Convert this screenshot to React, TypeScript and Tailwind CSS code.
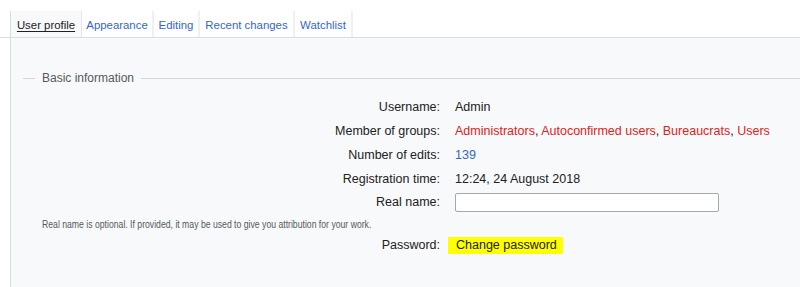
import React from "react";

const font = { fontFamily: '"Liberation Sans", Arial, sans-serif' };

function Row({ label, children, h = "h-[24px]" }: { label: string; children: React.ReactNode; h?: string }) {
  return (
    <div className={`flex items-center ${h}`}>
      <div className="w-[429px] text-right text-[12.5px] text-[#202122] leading-none">{label}</div>
      <div className="ml-[15px] text-[12.5px] leading-none flex items-center">{children}</div>
    </div>
  );
}

export default function App() {
  const tabs = [
    { t: "Appearance", w: "w-[72px]" },
    { t: "Editing", w: "w-[46px]" },
    { t: "Recent changes", w: "w-[95px]" },
    { t: "Watchlist", w: "w-[58px]" },
  ];
  return (
    <div className="w-[800px] h-[287px] bg-white overflow-hidden" style={font}>
      <div className="flex pl-[10px] pt-[11px] border-b border-[#dadde1]">
        <div className="w-[72px] h-[26px] -mb-px bg-[#f8f9fa] border-l border-[#dadde1] border-r border-r-[#e4e6e9] flex items-center justify-center pt-[4px]">
          <span className="text-[11.4px] text-[#202122] underline underline-offset-2 leading-none">User profile</span>
        </div>
        {tabs.map(({ t, w }) => (
          <div key={t} className={`${w} h-[26px] bg-white flex items-center justify-center pt-[4px] border-r-2 border-[#eef0f2]`}>
            <span className="text-[11.4px] text-[#3366cc] leading-none">{t}</span>
          </div>
        ))}
      </div>
      <div className="h-[250px] bg-[#f8f9fa] border-l border-[#dadde1] ml-[10px] pt-[30px]">
        <div className="flex items-center h-[20px] ml-[12px]">
          <div className="w-[12px] h-px bg-[#d3d6da]" />
          <span className="px-[7px] text-[12px] text-[#54595d] leading-none">Basic information</span>
          <div className="flex-1 h-px bg-[#d3d6da]" />
        </div>
        <div className="mt-[7px]">
          <Row label="Username:">
            <span className="text-[#202122]">Admin</span>
          </Row>
          <Row label="Member of groups:">
            <span className="text-[#202122]">
              <span className="text-[#d22]">Administrators</span>,{" "}
              <span className="text-[#d22]">Autoconfirmed users</span>,{" "}
              <span className="text-[#d22]">Bureaucrats</span>,{" "}
              <span className="text-[#d22]">Users</span>
            </span>
          </Row>
          <Row label="Number of edits:">
            <span className="text-[#3366cc]">139</span>
          </Row>
          <Row label="Registration time:">
            <span className="text-[#202122]">12:24, 24 August 2018</span>
          </Row>
          <Row label="Real name:" h="h-[22px]">
            <input
              type="text"
              className="w-[264px] h-[19px] bg-white border border-[#a2a9b1] rounded-[2px] outline-none"
            />
          </Row>
          <div className="h-[22px] flex items-center pl-[31px]">
            <span className="text-[10.5px] text-[#54595d] leading-none whitespace-nowrap origin-left scale-x-[0.825]">
              Real name is optional. If provided, it may be used to give you attribution for your work.
            </span>
          </div>
          <Row label="Password:" h="h-[20px]">
            <span className="-ml-[7px] bg-[#ffff00] h-[17px] pl-[8px] pr-[6px] flex items-center text-[#202122]">
              Change password
            </span>
          </Row>
        </div>
      </div>
    </div>
  );
}
